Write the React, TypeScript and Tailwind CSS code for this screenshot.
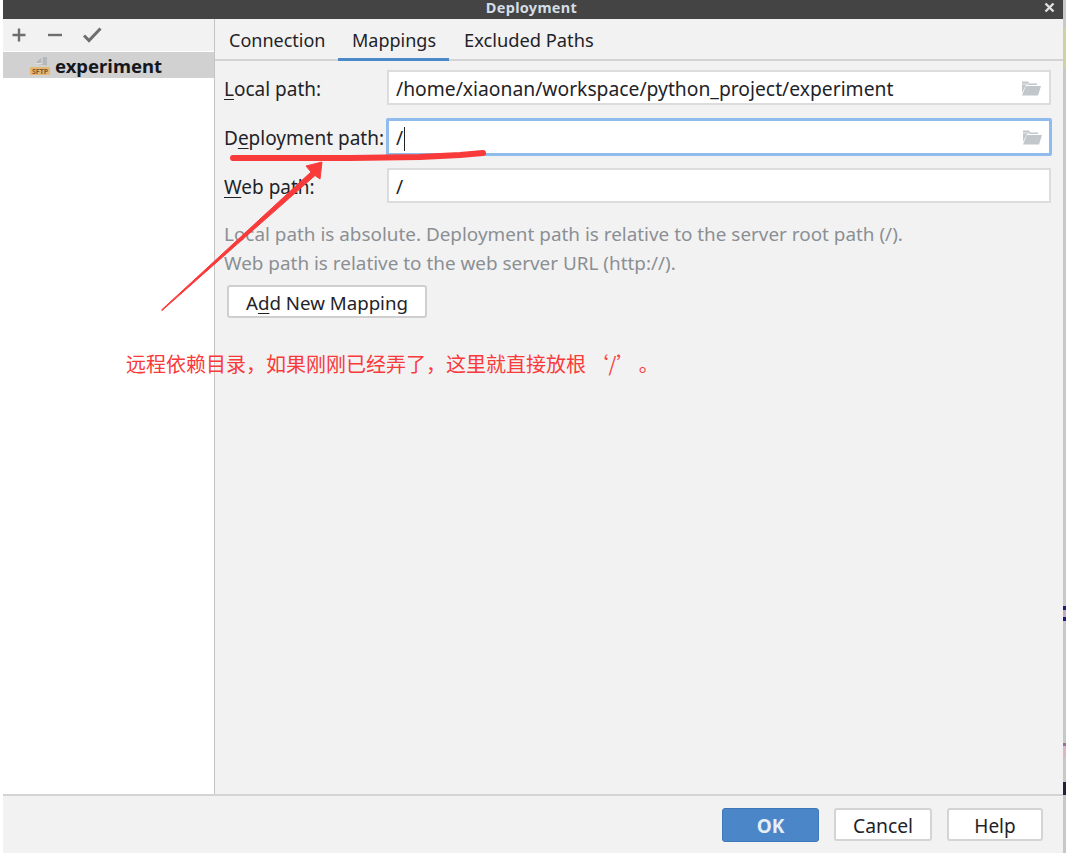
import React from "react";

const font = { fontFamily: '"Noto Sans", "Noto Sans CJK SC", sans-serif' };

function Folder() {
  return (
    <svg width="20" height="16" viewBox="0 0 20 16" className="shrink-0">
      <path d="M1 1.5h6l1.5 2H16v1.5H5L1 13z" fill="#c2c7cb" />
      <path d="M4.8 6H20l-3 9.5H1z" fill="#c2c7cb" />
      <path d="M1 3.5h7v1H1z" fill="#e8eaec" />
    </svg>
  );
}

function U({ children }: { children: React.ReactNode }) {
  return <span className="underline underline-offset-[3px] decoration-1">{children}</span>;
}

function Row({ label, value, focused, folder, caret }: { label: React.ReactNode; value: string; focused?: boolean; folder?: boolean; caret?: boolean }) {
  return (
    <div className="flex items-center h-[35px]">
      <div className="w-[164px] shrink-0 text-[#1f2328] whitespace-nowrap pt-[3px] -mr-[1px]">{label}</div>
      <div
        className={
          focused
            ? "flex-1 h-[38px] -mx-[1px] flex items-center pl-[7px] pr-[7px] bg-white border-[3px] border-[#8fbcec] rounded-[2px]"
            : "flex-1 h-[35px] flex items-center pl-[7px] pr-[8px] bg-white border-2 border-[#dcdcdc]"
        }
      >
        <span className="flex-1 text-[#1f2328] whitespace-nowrap text-[19.300px] pt-[3px]">
          {value}
          {caret && <span className="inline-block w-[1px] h-[24px] bg-[#222] align-middle ml-[1px]" />}
        </span>
        {folder && <Folder />}
      </div>
    </div>
  );
}

export default function App() {
  return (
    <div className="relative flex w-[1067px] h-[853px] bg-white overflow-hidden pl-[3px] text-[19px] leading-[26px]" style={font}>
      <div className="flex flex-col w-[1060px] h-full bg-[#f2f2f2] shrink-0">
        <div className="h-[19px] shrink-0 bg-[#444444] flex items-start justify-center relative">
          <span className="text-[14.500px] font-bold text-[#d3dde6] leading-[14px] tracking-[0.3px] -ml-[3px]">Deployment</span>
          <svg width="11" height="11" viewBox="0 0 11 11" className="absolute right-[8px] top-[2px]">
            <path d="M1.5 1.5l8 8M9.5 1.5l-8 8" stroke="#e0e0e0" strokeWidth="2.4" />
          </svg>
        </div>
        <div className="flex flex-1 min-h-0">
          <div className="w-[211px] shrink-0 flex flex-col bg-white border-r border-[#c4c4c4] box-content">
            <div className="h-[33px] shrink-0 bg-[#f2f2f2] flex items-center pl-[8px] border-b border-white">
              <svg width="16" height="16" viewBox="0 0 16 16"><path d="M8 1.5v13M1.5 8h13" stroke="#6e6e6e" strokeWidth="2.4" /></svg>
              <svg width="19" height="16" viewBox="0 0 19 16" className="ml-[18px]"><path d="M3 8h14" stroke="#6e6e6e" strokeWidth="2.4" /></svg>
              <svg width="19" height="16" viewBox="0 0 19 16" className="ml-[19px]"><path d="M1 8.500l5 5L17.500 1.500" fill="none" stroke="#6e6e6e" strokeWidth="3" /></svg>
            </div>
            <div className="h-[26px] shrink-0 bg-[#d1d1d1] flex items-center pl-[27px] gap-[5px]">
              <svg width="20" height="20" viewBox="0 0 20 20" className="shrink-0">
                <path d="M5 8.500L12 2h5v8.500z" fill="#b4b8bb" />
                <path d="M12 2v6.500H5" fill="none" stroke="#dfe1e2" strokeWidth="1" />
                <rect x="0" y="12" width="20" height="8" rx="1" fill="#e3b673" />
                <text x="10" y="18.500" textAnchor="middle" fontSize="7" fontWeight="700" fill="#7a5a28" style={font}>SFTP</text>
              </svg>
              <span className="font-bold text-[#14181c] text-[18.500px] pt-[2px]">experiment</span>
            </div>
          </div>
          <div className="flex-1 flex flex-col min-w-0">
            <div className="h-[42px] shrink-0 flex border-b-2 border-[#d4d4d4] pl-[2px] text-[18px] text-[#1f2328]">
              <div className="pl-[12px] w-[121px] pt-[8px]">Connection</div>
              <div className="pl-[14px] w-[111px] pt-[8px] h-[42px] border-b-[3px] border-[#4a88c7]">Mappings</div>
              <div className="pl-[15px] pt-[8px] text-[18.300px]">Excluded Paths</div>
            </div>
            <div className="flex-1 pt-[9px] pl-[9px] pr-[12px] flex flex-col">
              <div className="flex flex-col gap-[14px]">
                <Row label={<><U>L</U>ocal path:</>} value="/home/xiaonan/workspace/python_project/experiment" folder />
                <Row label={<>D<U>e</U>ployment path:</>} value="/" focused folder caret />
                <Row label={<><U>W</U>eb path:</>} value="/" />
              </div>
              <div className="mt-[17px] text-[#8b8f94] leading-[29px] text-[18.900px]">
                <div>Local path is absolute. Deployment path is relative to the server root path (/).</div>
                <div>Web path is relative to the web server URL (http://).</div>
              </div>
              <button className="mt-[7px] ml-[3px] w-[200px] h-[33px] pt-[2px] bg-white border-2 border-[#cfcfcf] rounded-[3px] text-[#1f2328] text-[18.700px]" style={font}>
                A<U>d</U>d New Mapping
              </button>
            </div>
          </div>
        </div>
        <div className="h-[59px] shrink-0 border-t-2 border-[#d4d4d4] flex items-center justify-end gap-[15px] pr-[20px]">
          <button className="w-[97px] h-[34px] pt-[3px] bg-[#4a86c8] border border-[#3f78b8] rounded-[3px] font-bold text-[#e6eef7]" style={font}>OK</button>
          <button className="w-[98px] h-[33px] pt-[3px] bg-white border-2 border-[#d4d4d4] rounded-[3px] text-[#1f2328] text-[19.300px]" style={font}>Cancel</button>
          <button className="w-[96px] h-[33px] pt-[3px] bg-white border-2 border-[#d4d4d4] rounded-[3px] text-[#1f2328]" style={font}>Help</button>
        </div>
      </div>

      {/* Edge of the window behind the dialog */}
      <div className="relative w-[3px] h-full bg-[#c8c8c8] shrink-0">
        <div className="absolute left-0 top-[28px] w-full h-[40px] bg-[#cfd2a0]" />
        <div className="absolute left-0 top-[606px] w-full h-[4px] bg-[#1c1c7a]" />
        <div className="absolute left-0 top-[610px] w-full h-[7px] bg-[#c8a8bc]" />
        <div className="absolute left-0 top-[617px] w-full h-[4px] bg-[#1c1c7a]" />
        <div className="absolute left-0 top-[743px] w-full h-[3px] bg-[#a06c9e]" />
        <div className="absolute left-0 top-[746px] w-full h-[12px] bg-[#d6b8c8]" />
        <div className="absolute left-0 top-[782px] w-full h-[13px] bg-[#26203a]" />
      </div>

      {/* Annotations over the screenshot */}
      <svg width="1067" height="853" viewBox="0 0 1067 853" className="absolute left-0 top-0 pointer-events-none">
        <path d="M233 158L350 158L420 157L460 155L483 153" fill="none" stroke="#f93a3a" strokeWidth="6" strokeLinecap="round" strokeLinejoin="round" />
        <path d="M161.500 310L311 172L306 166L322 162L320 179L315 175.500L162 310.500z" fill="#f93a3a" stroke="#f93a3a" strokeWidth="1" />
      </svg>
      <div className="absolute left-[126px] top-[351px] text-[#f93a3a] text-[20px] leading-[26px] whitespace-nowrap [word-spacing:-2px]" style={{ fontFamily: '"Noto Sans CJK SC", sans-serif' }}>
        远程依赖目录，如果刚刚已经弄了，这里就直接放根 ‘/’ 。
      </div>
    </div>
  );
}
